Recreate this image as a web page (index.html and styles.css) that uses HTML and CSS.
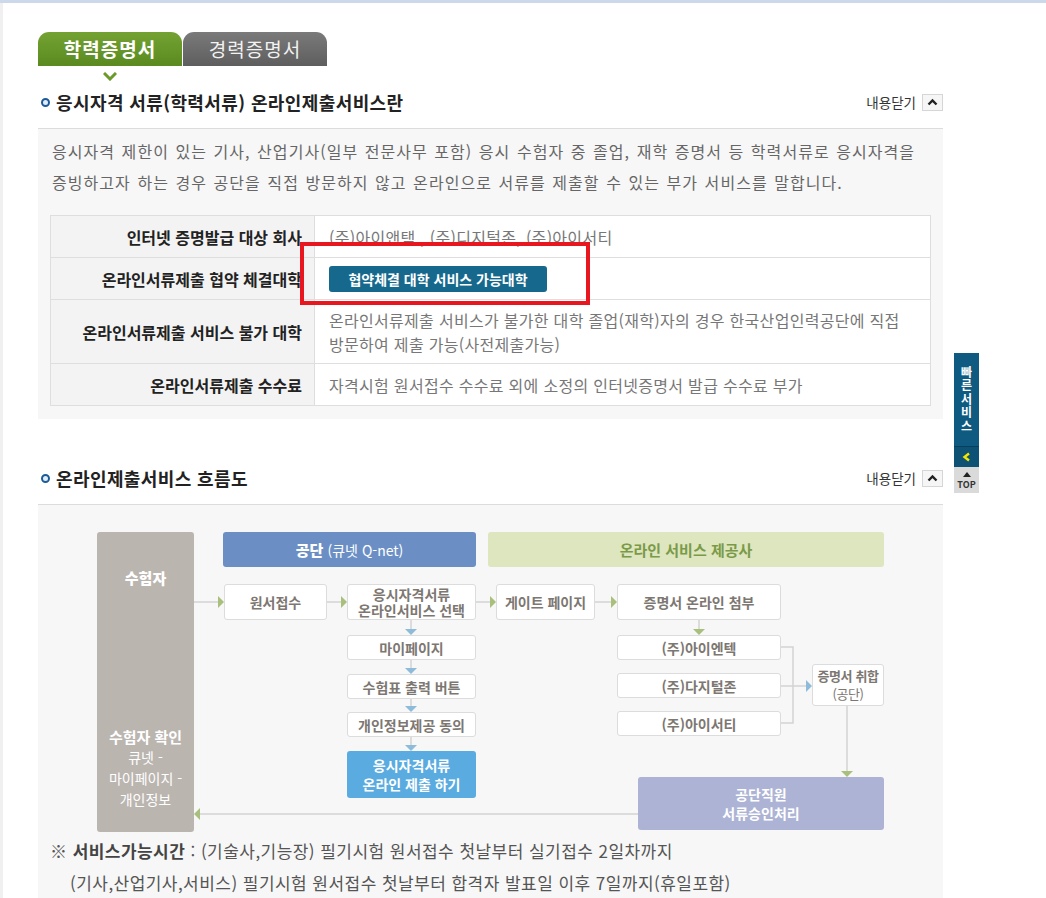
FILE: index.html
```html
<!DOCTYPE html>
<html lang="ko">
<head>
  <meta charset="UTF-8">
  <meta name="viewport" content="width=device-width, initial-scale=1.0">
  <title>학력증명서 온라인제출서비스</title>
  <link rel="stylesheet" href="styles.css">
</head>
<body>
  <div class="page">
    <div class="container">
      <ul class="tabs">
        <li class="tab tab-on">학력증명서
          <svg class="tab-pointer" width="14" height="9" viewBox="0 0 14 9"><path d="M1 1 L7 7 L13 1" fill="none" stroke="#6b9a2a" stroke-width="3"/></svg>
        </li>
        <li class="tab">경력증명서</li>
      </ul>

      <div class="sec-head">
        <h2><span class="bullet"></span>응시자격 서류(학력서류) 온라인제출서비스란</h2>
        <a href="#" class="fold">내용닫기 <span class="fold-btn"><svg width="11" height="8" viewBox="0 0 11 8"><path d="M1.5 6.5 L5.5 2.5 L9.5 6.5" fill="none" stroke="#222" stroke-width="2.4"/></svg></span></a>
      </div>
      <div class="sec-box">
        <p class="intro">응시자격 제한이 있는 기사, 산업기사(일부 전문사무 포함) 응시 수험자 중 졸업, 재학 증명서 등 학력서류로 응시자격을 증빙하고자 하는 경우 공단을 직접 방문하지 않고 온라인으로 서류를 제출할 수 있는 부가 서비스를 말합니다.</p>
        <div class="table-wrap">
          <table class="info">
            <tr class="row-s">
              <th>인터넷 증명발급 대상 회사</th>
              <td>(주)아이앤택 , (주)디지털존, (주)아이서티</td>
            </tr>
            <tr class="row-s">
              <th>온라인서류제출 협약 체결대학</th>
              <td><a href="#" class="btn-univ">협약체결 대학 서비스 가능대학</a></td>
            </tr>
            <tr class="row-l">
              <th>온라인서류제출 서비스 불가 대학</th>
              <td>온라인서류제출 서비스가 불가한 대학 졸업(재학)자의 경우 한국산업인력공단에 직접<br>방문하여 제출 가능(사전제출가능)</td>
            </tr>
            <tr class="row-s">
              <th>온라인서류제출 수수료</th>
              <td>자격시험 원서접수 수수료 외에 소정의 인터넷증명서 발급 수수료 부가</td>
            </tr>
          </table>
          <div class="mark"></div>
        </div>
      </div>

      <div class="sec-head sec-head-2">
        <h2><span class="bullet"></span>온라인제출서비스 흐름도</h2>
        <a href="#" class="fold">내용닫기 <span class="fold-btn"><svg width="11" height="8" viewBox="0 0 11 8"><path d="M1.5 6.5 L5.5 2.5 L9.5 6.5" fill="none" stroke="#222" stroke-width="2.4"/></svg></span></a>
      </div>
      <div class="sec-box flow-box">
        <div class="diagram">
          <svg class="links" width="905" height="330" viewBox="0 0 905 330">
            <g fill="none" stroke="#d3d3d3" stroke-width="1.5">
              <path d="M156 97 H182"/>
              <path d="M289 97 H304"/>
              <path d="M438 97 H453"/>
              <path d="M557 97 H574"/>
              <path d="M373 115 V125"/>
              <path d="M373 155 V164"/>
              <path d="M373 194 V202"/>
              <path d="M373 232 V241"/>
              <path d="M661 115 V125"/>
              <path d="M743 142 H755 V218 H743"/>
              <path d="M743 181 H769"/>
              <path d="M809 201 V267"/>
              <path d="M600 309 H161"/>
            </g>
            <g fill="#a9c07c">
              <polygon points="180,91 186,97 180,103"/>
              <polygon points="303,91 309,97 303,103"/>
              <polygon points="452,91 458,97 452,103"/>
              <polygon points="573,91 579,97 573,103"/>
              <polygon points="655,124 667,124 661,130"/>
              <polygon points="803,266 815,266 809,272"/>
              <polygon points="162,303 156,309 162,315"/>
            </g>
            <g fill="#8dbbd9">
              <polygon points="367,124 379,124 373,130"/>
              <polygon points="367,163 379,163 373,169"/>
              <polygon points="367,201 379,201 373,207"/>
              <polygon points="367,240 379,240 373,246"/>
              <polygon points="768,175 774,181 768,187"/>
            </g>
          </svg>

          <div class="node person" style="left:59px;top:27px;width:97px;height:300px">
            <strong class="person-top">수험자</strong>
            <span class="person-bottom"><strong>수험자 확인</strong>큐넷 -<br>마이페이지 -<br>개인정보</span>
          </div>
          <div class="node head-blue" style="left:185px;top:27px;width:253px;height:35px"><strong>공단</strong>&nbsp;<span>(큐넷 Q-net)</span></div>
          <div class="node head-green" style="left:450px;top:27px;width:396px;height:35px">온라인 서비스 제공사</div>

          <div class="node step" style="left:186px;top:79px;width:103px;height:36px">원서접수</div>
          <div class="node step" style="left:309px;top:79px;width:129px;height:36px">응시자격서류<br>온라인서비스 선택</div>
          <div class="node step" style="left:458px;top:79px;width:99px;height:36px">게이트 페이지</div>
          <div class="node step" style="left:579px;top:79px;width:164px;height:36px">증명서 온라인 첨부</div>

          <div class="node step" style="left:309px;top:130px;width:129px;height:25px">마이페이지</div>
          <div class="node step" style="left:309px;top:169px;width:129px;height:25px">수험표 출력 버튼</div>
          <div class="node step" style="left:309px;top:207px;width:129px;height:25px">개인정보제공 동의</div>
          <div class="node submit" style="left:309px;top:246px;width:129px;height:47px">응시자격서류<br>온라인 제출 하기</div>

          <div class="node step" style="left:579px;top:130px;width:164px;height:25px">(주)아이엔텍</div>
          <div class="node step" style="left:579px;top:168px;width:164px;height:25px">(주)다지털존</div>
          <div class="node step" style="left:579px;top:206px;width:164px;height:25px">(주)아이서티</div>
          <div class="node step step-sm" style="left:774px;top:159px;width:72px;height:42px">증명서 취합<br><span class="sub">(공단)</span></div>
          <div class="node approve" style="left:600px;top:272px;width:246px;height:53px">공단직원<br>서류승인처리</div>
        </div>
        <p class="note">※ <strong>서비스가능시간</strong> : (기술사,기능장) 필기시험 원서접수 첫날부터 실기접수 2일차까지</p>
        <p class="note note-indent">(기사,산업기사,서비스) 필기시험 원서접수 첫날부터 합격자 발표일 이후 7일까지(휴일포함)</p>
      </div>
    </div>

    <div class="quick">
      <a href="#" class="quick-title"><span class="quick-text">빠른서비스</span></a>
      <a href="#" class="quick-toggle"><svg width="9" height="10" viewBox="0 0 9 10"><path d="M7 1.5 L2.5 5 L7 8.5" fill="none" stroke="#f2e600" stroke-width="2.4"/></svg></a>
      <a href="#" class="quick-top"><span class="tri"></span>TOP</a>
    </div>
  </div>
</body>
</html>
```

FILE: styles.css
```css
body {
  margin: 0;
  font-family: "Noto Sans CJK KR", "Noto Sans", sans-serif;
  color: #333;
  background-color: #ffffff;
  border-top: 3px solid #cbd9ea;
}
.page {
  position: relative;
  min-height: 895px;
  border-left: 3px solid #f0f0f0;
}
.container {
  width: 905px;
  margin-left: 35px;
  padding-top: 29px;
}
a {
  text-decoration: none;
}
.tabs {
  display: flex;
  list-style: none;
  margin: 0;
  padding: 0;
  height: 34px;
}
.tab {
  position: relative;
  width: 144px;
  height: 34px;
  margin-right: 1px;
  border-radius: 11px 11px 0 0;
  background: linear-gradient(#7a7a7a, #5e5e5e);
  color: #f2f2f2;
  font-size: 19px;
  line-height: 34px;
  text-align: center;
  letter-spacing: 1px;
}
.tab-on {
  background: linear-gradient(#74a232, #5a8a20);
  color: #ffffff;
  font-weight: bold;
}
.tab-pointer {
  position: absolute;
  left: 65px;
  bottom: -15px;
}
.sec-head {
  display: flex;
  align-items: center;
  justify-content: space-between;
  height: 40px;
  margin-top: 16px;
  margin-bottom: 6px;
}
.sec-head-2 {
  margin-top: 39px;
}
.sec-head h2 {
  display: flex;
  align-items: center;
  margin: 0;
  font-size: 18px;
  font-weight: bold;
  color: #222;
  letter-spacing: 0.4px;
}
.bullet {
  display: inline-block;
  width: 5px;
  height: 5px;
  margin: 1px 6px 0 3px;
  border: 2.5px solid #1c5b9b;
  border-radius: 50%;
  background-color: #e3edf7;
}
.fold {
  display: flex;
  align-items: center;
  font-size: 13.5px;
  color: #333;
}
.fold-btn {
  display: inline-flex;
  align-items: center;
  justify-content: center;
  width: 19px;
  height: 15px;
  margin-left: 6px;
  border: 1px solid #d6d6d6;
  background-color: #f6f6f6;
}
.sec-box {
  background-color: #f7f7f7;
  border-top: 1px solid #dcdcdc;
  padding: 7px 12px 13px;
}
.intro {
  margin: 0 0 17px;
  padding-left: 2px;
  font-size: 16px;
  line-height: 31px;
  color: #666;
  letter-spacing: 1.05px;
  word-spacing: 1px;
}
.table-wrap {
  position: relative;
}
.info {
  width: 100%;
  border-collapse: collapse;
  font-size: 16px;
}
.info th,
.info td {
  border: 1px solid #dedede;
}
.info th {
  width: 251px;
  padding: 0 12px 0 0;
  background-color: #f3f3f3;
  color: #222;
  font-weight: bold;
  text-align: right;
}
.info td {
  padding: 0 14px;
  background-color: #ffffff;
  color: #777;
  line-height: 24px;
  letter-spacing: 0.3px;
}
.row-s {
  height: 42px;
}
.row-l {
  height: 64px;
}
.btn-univ {
  display: inline-block;
  width: 218px;
  height: 26px;
  border-radius: 3px;
  background-color: #16698d;
  color: #ffffff;
  font-size: 14px;
  font-weight: bold;
  line-height: 26px;
  text-align: center;
  letter-spacing: 0;
}
.mark {
  position: absolute;
  left: 250px;
  top: 27px;
  width: 290px;
  height: 63px;
  box-sizing: border-box;
  border: 4px solid #e8161e;
}
.flow-box {
  padding: 0 0 10px;
}
.diagram {
  position: relative;
  height: 330px;
}
.links {
  position: absolute;
  left: 0;
  top: 0;
}
.node {
  position: absolute;
  box-sizing: border-box;
  display: flex;
  flex-direction: column;
  align-items: center;
  justify-content: center;
  border-radius: 3px;
  font-size: 14px;
  font-weight: bold;
  line-height: 16px;
  text-align: center;
  white-space: nowrap;
}
.step {
  background-color: #ffffff;
  border: 1px solid #dcdcdc;
  color: #7d7772;
}
.step-sm {
  font-size: 13px;
  letter-spacing: -0.4px;
  line-height: 18px;
}
.step .sub {
  font-weight: normal;
}
.person {
  justify-content: space-between;
  padding: 38px 0 22px;
  background-color: #bbb5b0;
  color: #ffffff;
}
.person-top {
  font-size: 15px;
}
.person-bottom {
  font-size: 14px;
  font-weight: normal;
  line-height: 21px;
}
.person-bottom strong {
  display: block;
  font-size: 15px;
}
.head-blue {
  flex-direction: row;
  background-color: #6b8fc5;
  color: #ffffff;
  font-size: 15px;
}
.head-blue span {
  font-size: 14px;
  font-weight: normal;
}
.head-green {
  background-color: #dde6bf;
  color: #7b9a48;
  font-size: 15px;
}
.submit {
  background-color: #5aabdf;
  color: #ffffff;
  line-height: 19px;
}
.approve {
  background-color: #adb3d4;
  color: #ffffff;
  line-height: 19px;
}
.note {
  margin: 0;
  padding-left: 12px;
  font-size: 17px;
  line-height: 32px;
  color: #555;
  letter-spacing: 0.45px;
}
.note strong {
  color: #444;
}
.note-indent {
  padding-left: 32px;
}
.quick {
  position: absolute;
  left: 951px;
  top: 350px;
  width: 25px;
}
.quick-title {
  display: flex;
  justify-content: center;
  height: 93px;
  padding-top: 13px;
  box-sizing: border-box;
  background-color: #0f5a80;
}
.quick-text {
  writing-mode: vertical-rl;
  text-orientation: upright;
  color: #ffffff;
  font-size: 12px;
  font-weight: bold;
  line-height: 25px;
  letter-spacing: 1.5px;
}
.quick-toggle {
  display: flex;
  align-items: center;
  justify-content: center;
  height: 20px;
  border-top: 1px solid #0a3f5c;
  background-color: #0d5174;
}
.quick-top {
  display: flex;
  flex-direction: column;
  align-items: center;
  height: 26px;
  background-color: #dadada;
  color: #333;
  font-size: 9px;
  font-weight: bold;
  line-height: 11px;
}
.tri {
  width: 0;
  height: 0;
  margin: 5px 0 2px;
  border-left: 4px solid transparent;
  border-right: 4px solid transparent;
  border-bottom: 5px solid #222;
}
```
